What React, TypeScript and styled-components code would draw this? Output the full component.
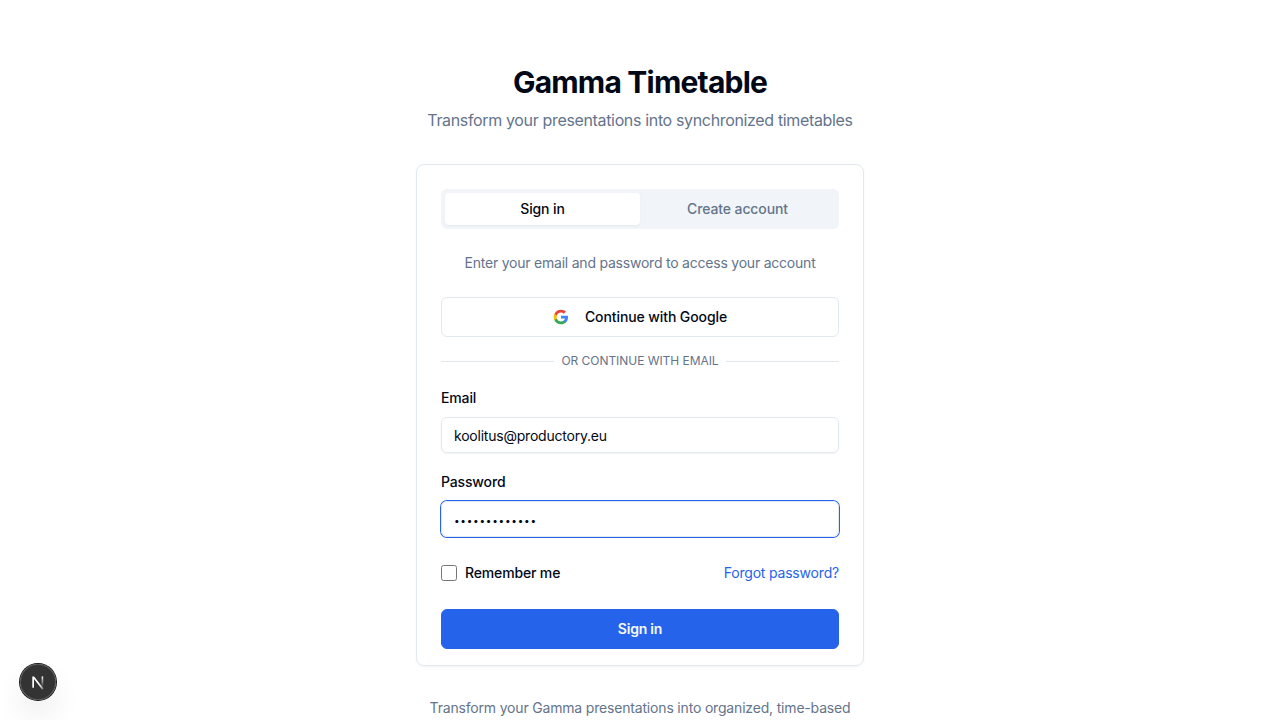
import React from 'react';
import styled, { createGlobalStyle, css } from 'styled-components';

const GlobalStyle = createGlobalStyle`
  *, *::before, *::after { box-sizing: border-box; }
  html, body { margin: 0; height: 100%; overflow: hidden; }
  body {
    font-family: Inter, sans-serif;
    color: #020817;
    background: #fff;
    font-size: 16px;
    line-height: 24px;
  }
  h1, p { margin: 0; }
  button, input { font-family: inherit; color: inherit; }
`;

const Page = styled.main`
  display: flex;
  flex-direction: column;
  align-items: center;
  height: 720px;
  overflow: hidden;
  padding-top: 64px;
`;

const Column = styled.div`
  display: flex;
  flex-direction: column;
  flex-shrink: 0;
  width: 448px;
  gap: 32px;
`;

const Header = styled.header`
  display: flex;
  flex-direction: column;
  gap: 8px;
  text-align: center;
`;

const Title = styled.h1`
  font-size: 30px;
  line-height: 36px;
  font-weight: 700;
  letter-spacing: -0.8px;
`;

const Subtitle = styled.p`
  color: #64748b;
  letter-spacing: -0.345px;
`;

const Card = styled.section`
  height: 502px;
  padding: 24px;
  border: 1px solid #e2e8f0;
  border-radius: 8px;
  box-shadow: 0 1px 2px rgba(0, 0, 0, 0.05);
`;

const TabList = styled.div`
  display: grid;
  grid-template-columns: 1fr 1fr;
  height: 40px;
  padding: 4px;
  border-radius: 6px;
  background: #f1f5f9;
`;

const Tab = styled.button<{ $active?: boolean }>`
  border: 0;
  padding: 0;
  border-radius: 4px;
  background: transparent;
  color: #64748b;
  font-size: 14px;
  line-height: 20px;
  font-weight: 500;
  letter-spacing: -0.11px;
  ${(p) => p.$active && css`
    background: #fff;
    color: #020817;
    box-shadow: 0 1px 2px rgba(0, 0, 0, 0.05);
  `}
`;

const Hint = styled.p`
  margin: 24px 0;
  text-align: center;
  font-size: 14px;
  line-height: 20px;
  letter-spacing: -0.22px;
  color: #64748b;
`;

const Button = styled.button<{ $primary?: boolean }>`
  display: flex;
  align-items: center;
  justify-content: center;
  gap: 16px;
  width: 100%;
  height: 40px;
  padding: 0;
  border-radius: 6px;
  border: 1px solid ${(p) => (p.$primary ? '#2563eb' : '#e2e8f0')};
  background: ${(p) => (p.$primary ? '#2563eb' : '#fff')};
  color: ${(p) => (p.$primary ? '#f8fafc' : '#020817')};
  font-size: 14px;
  line-height: 20px;
  font-weight: ${(p) => (p.$primary ? 600 : 500)};
  letter-spacing: ${(p) => (p.$primary ? '-0.22px' : '-0.1px')};
`;

const Divider = styled.div`
  display: flex;
  align-items: center;
  gap: 7px;
  margin: 16px 0;
  font-size: 12px;
  line-height: 16px;
  letter-spacing: -0.05px;
  color: #64748b;
  text-transform: uppercase;
  &::before, &::after {
    content: '';
    flex: 1;
    height: 1px;
    margin-top: 1px;
    background: #e2e8f0;
  }
`;

const Field = styled.div`
  display: flex;
  flex-direction: column;
  gap: 7px;
  margin-bottom: 16px;
  padding-top: 1px;
`;

const Label = styled.label`
  font-size: 14px;
  line-height: 24px;
  font-weight: 500;
  letter-spacing: -0.15px;
`;

const Input = styled.input`
  width: 100%;
  height: 36px;
  padding: 4px 12px;
  border: 1px solid #e2e8f0;
  border-radius: 6px;
  background: transparent;
  box-shadow: 0 1px 2px rgba(0, 0, 0, 0.05);
  font-size: 14px;
  line-height: 20px;
  letter-spacing: -0.22px;
  outline: none;
  &[type='password'] {
    padding-top: 6px;
    font-size: 10px;
    letter-spacing: 0.74px;
    box-shadow: 0 0 0 1px #2563eb, 0 1px 2px rgba(0, 0, 0, 0.05);
  }
`;

const Options = styled.div`
  display: flex;
  align-items: center;
  justify-content: space-between;
  height: 20px;
  margin: 26px 0;
`;

const Remember = styled.div`
  display: flex;
  align-items: center;
  gap: 8px;
`;

const Checkbox = styled.input`
  width: 16px;
  height: 16px;
  margin: 0;
`;

const Forgot = styled.a`
  font-size: 14px;
  line-height: 20px;
  letter-spacing: -0.19px;
  color: #2563eb;
`;

const Footer = styled.p`
  text-align: center;
  font-size: 14px;
  line-height: 20px;
  letter-spacing: -0.18px;
  color: #64748b;
`;

const DevBadge = styled.div`
  position: fixed;
  left: 20px;
  bottom: 20px;
  display: flex;
  width: 36px;
  height: 36px;
  border-radius: 50%;
  background: rgba(0, 0, 0, 0.8);
  box-shadow: 0 0 0 1px #171717, inset 0 0 0 1px rgba(255, 255, 255, 0.14), 0 16px 32px -8px rgba(0, 0, 0, 0.24);
`;

const GoogleIcon = () => (
  <svg width="16" height="16" viewBox="0 0 24 24">
    <path d="M22.56 12.25c0-.78-.07-1.53-.2-2.25H12v4.26h5.92c-.26 1.37-1.04 2.53-2.21 3.31v2.77h3.57c2.08-1.92 3.28-4.74 3.28-8.09z" fill="#4285F4" />
    <path d="M12 23c2.97 0 5.46-.98 7.28-2.66l-3.57-2.77c-.98.66-2.23 1.06-3.71 1.06-2.86 0-5.29-1.93-6.16-4.53H2.18v2.84C3.99 20.53 7.7 23 12 23z" fill="#34A853" />
    <path d="M5.84 14.09c-.22-.66-.35-1.36-.35-2.09s.13-1.43.35-2.09V7.07H2.18C1.43 8.55 1 10.22 1 12s.43 3.45 1.18 4.93l2.85-2.22.81-.62z" fill="#FBBC05" />
    <path d="M12 5.38c1.62 0 3.06.56 4.21 1.64l3.15-3.15C17.45 2.09 14.97 1 12 1 7.7 1 3.99 3.47 2.18 7.07l3.66 2.84c.87-2.6 3.3-4.53 6.16-4.53z" fill="#EA4335" />
  </svg>
);

const NextMark = () => (
  <svg width="36" height="36" viewBox="0 0 36 36" fill="none">
    <defs>
      <linearGradient id="diagonal" x1="18" y1="18" x2="24" y2="26" gradientUnits="userSpaceOnUse">
        <stop stopColor="#fff" />
        <stop offset="0.5" stopColor="#fff" stopOpacity="0.8" />
        <stop offset="1" stopColor="#fff" stopOpacity="0.2" />
      </linearGradient>
      <linearGradient id="bar" x1="22.4" y1="12" x2="22.4" y2="23" gradientUnits="userSpaceOnUse">
        <stop stopColor="#fff" />
        <stop offset="1" stopColor="#fff" stopOpacity="0" />
      </linearGradient>
    </defs>
    <path d="M12.3 12.4H14.1L23.6 24.6L22.2 25.7L14 15.1V23.8H12.3Z" fill="url(#diagonal)" />
    <path d="M22.4 12.4V23.5" stroke="url(#bar)" strokeWidth="1.6" />
  </svg>
);

export default function App() {
  return (
    <>
      <GlobalStyle />
      <Page>
        <Column>
          <Header>
            <Title>Gamma Timetable</Title>
            <Subtitle>Transform your presentations into synchronized timetables</Subtitle>
          </Header>
          <Card>
            <TabList>
              <Tab $active>Sign in</Tab>
              <Tab>Create account</Tab>
            </TabList>
            <Hint>Enter your email and password to access your account</Hint>
            <Button><GoogleIcon />Continue with Google</Button>
            <Divider>Or continue with email</Divider>
            <Field>
              <Label htmlFor="email">Email</Label>
              <Input id="email" type="email" defaultValue="koolitus@productory.eu" />
            </Field>
            <Field>
              <Label htmlFor="password">Password</Label>
              <Input id="password" type="password" defaultValue="abcdefghijklm" />
            </Field>
            <Options>
              <Remember>
                <Checkbox id="remember" type="checkbox" />
                <Label htmlFor="remember">Remember me</Label>
              </Remember>
              <Forgot>Forgot password?</Forgot>
            </Options>
            <Button $primary>Sign in</Button>
          </Card>
          <Footer>Transform your Gamma presentations into organized, time-based</Footer>
        </Column>
      </Page>
      <DevBadge><NextMark /></DevBadge>
    </>
  );
}
